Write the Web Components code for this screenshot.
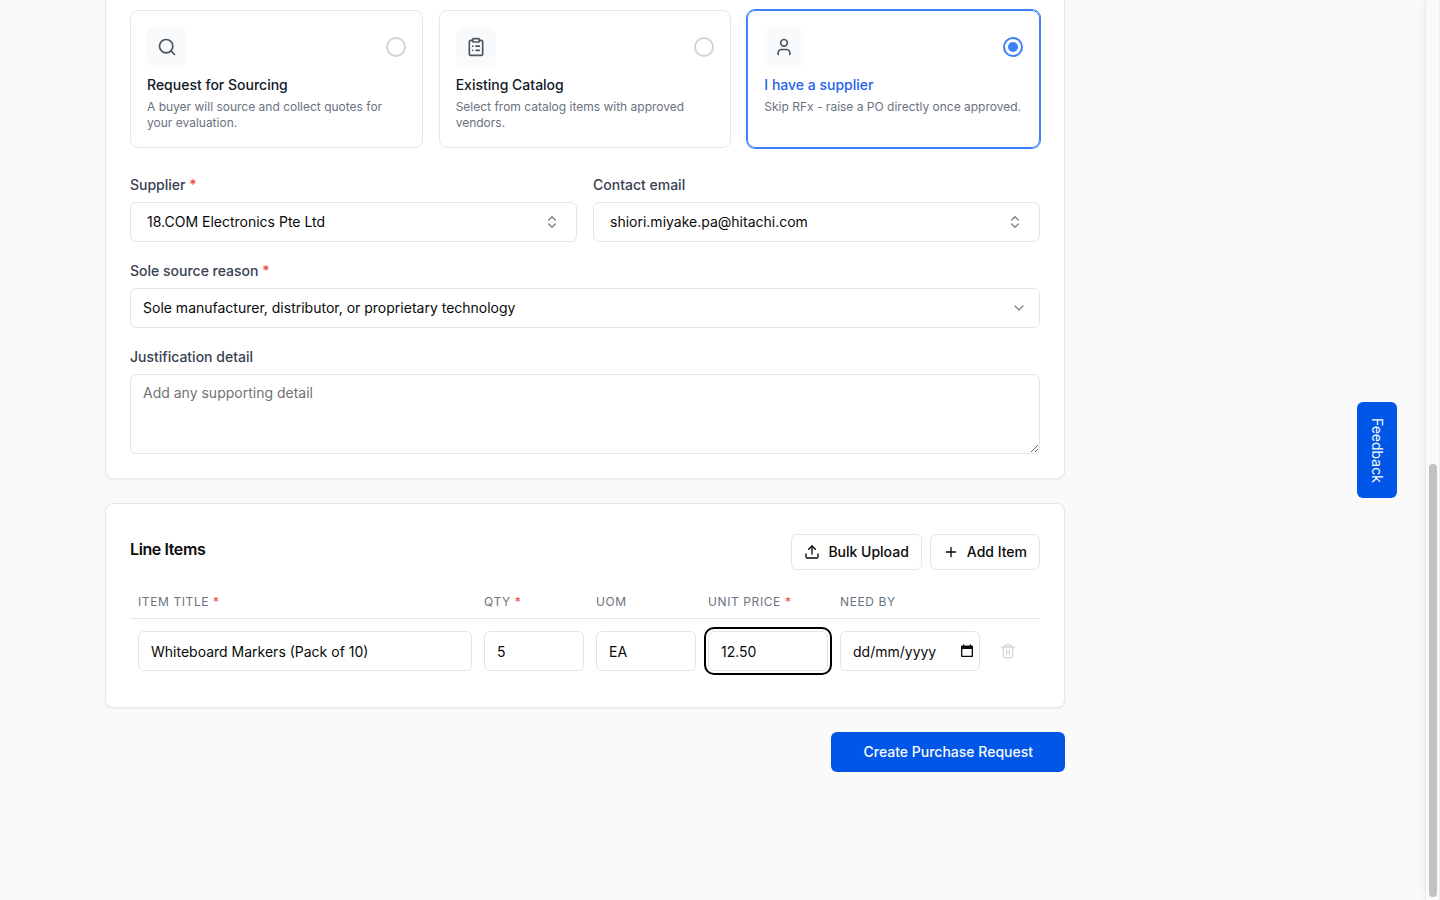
<!DOCTYPE html>
<html lang="en">
<head>
<meta charset="utf-8">
<meta name="viewport" content="width=device-width, initial-scale=1">
<title>Create Purchase Request</title>
<style>
    :root {
        --blue: #3b82f6;
        --brand: #0057e7;
        --ink: #0a0a0a;
        --heading: #111827;
        --label: #374151;
        --muted: #6b7280;
        --line: #e5e5e5;
        --required: #ef4444;
    }
    body {
        margin: 0;
        background: #fafafa;
        color: var(--ink);
        font: 14px/20px Inter, "Liberation Sans", sans-serif;
    }
</style>
</head>
<body>
<request-page>
    <panel-card continued>
        <option-group label="Sourcing method">
            <option-card value="sourcing" icon="search" heading="Request for Sourcing">A buyer will source and collect quotes for your evaluation.</option-card>
            <option-card value="catalog" icon="clipboard" heading="Existing Catalog">Select from catalog items with approved vendors.</option-card>
            <option-card value="supplier" icon="user" heading="I have a supplier" checked>Skip RFx - raise a PO directly once approved.</option-card>
        </option-group>
        <supplier-form></supplier-form>
    </panel-card>
    <panel-card>
        <line-items></line-items>
    </panel-card>
    <submit-button>Create Purchase Request</submit-button>
</request-page>
<feedback-tab>Feedback</feedback-tab>
<scroll-rail></scroll-rail>

<script>
const ICONS = {
    search: '<circle cx="11" cy="11" r="8"/><path d="m21 21-4.3-4.3"/>',
    clipboard: '<rect x="8" y="2" width="8" height="4" rx="1"/><path d="M16 4h2a2 2 0 0 1 2 2v14a2 2 0 0 1-2 2H6a2 2 0 0 1-2-2V6a2 2 0 0 1 2-2h2"/><path d="M12 11h4M12 16h4M8 11h.01M8 16h.01"/>',
    user: '<path d="M19 21v-2a4 4 0 0 0-4-4H9a4 4 0 0 0-4 4v2"/><circle cx="12" cy="7" r="4"/>',
    upload: '<path d="M21 15v4a2 2 0 0 1-2 2H5a2 2 0 0 1-2-2v-4"/><path d="m17 8-5-5-5 5"/><path d="M12 3v12"/>',
    plus: '<path d="M5 12h14M12 5v14"/>',
    updown: '<path d="m7 15 5 5 5-5M7 9l5-5 5 5"/>',
    down: '<path d="m6 9 6 6 6-6"/>',
    trash: '<path d="M3 6h18M19 6v14a2 2 0 0 1-2 2H7a2 2 0 0 1-2-2V6M8 6V4a2 2 0 0 1 2-2h4a2 2 0 0 1 2 2v2M10 11v6M14 11v6"/>',
    calendar: '<path d="M4 5h16v15H4z"/><path d="M4 5h16v3H4z" fill="currentColor"/><path d="M7 3v2M17 3v2"/>'
};

class UiIcon extends HTMLElement {
    connectedCallback() {
        const size = this.getAttribute('size') || 16;
        this.attachShadow({ mode: 'open' }).innerHTML = `
            <style>
                :host { display: block; width: ${size}px; height: ${size}px; flex: none; }
                svg { display: block; width: 100%; height: 100%; }
            </style>
            <svg viewBox="0 0 24 24" fill="none" stroke="currentColor" stroke-width="2"
                 stroke-linecap="round" stroke-linejoin="round" aria-hidden="true">${ICONS[this.getAttribute('name')]}</svg>
        `;
    }
}

class RequestPage extends HTMLElement {
    connectedCallback() {
        this.attachShadow({ mode: 'open' }).innerHTML = `
            <style>
                :host { display: block; padding: 0 120px 24px 105px; }
                main { display: flex; flex-direction: column; gap: 24px; max-width: 960px; }
            </style>
            <main><slot></slot></main>
        `;
    }
}

class PanelCard extends HTMLElement {
    connectedCallback() {
        this.attachShadow({ mode: 'open' }).innerHTML = `
            <style>
                :host {
                    display: block;
                    padding: 24px;
                    border: 1px solid #e2e8f0;
                    border-radius: 8px;
                    background: #fff;
                    box-shadow: 0 1px 2px rgb(0 0 0 / 5%);
                }
                /* runs on from above the top edge of the window */
                :host([continued]) {
                    padding-top: 10px;
                    border-top: 0;
                    border-top-left-radius: 0;
                    border-top-right-radius: 0;
                }
            </style>
            <slot></slot>
        `;
    }
}

class OptionGroup extends HTMLElement {
    connectedCallback() {
        this.attachShadow({ mode: 'open' }).innerHTML = `
            <style>
                :host { display: block; }
                div { display: grid; grid-template-columns: repeat(3, 1fr); gap: 16px; }
            </style>
            <div role="radiogroup" aria-label="${this.getAttribute('label')}"><slot></slot></div>
        `;
        this.addEventListener('option-picked', (event) => {
            for (const card of this.children) {
                card.toggleAttribute('checked', card === event.target);
            }
        });
    }
}

class OptionCard extends HTMLElement {
    static observedAttributes = ['checked'];

    connectedCallback() {
        this.attachShadow({ mode: 'open' }).innerHTML = `
            <style>
                :host { display: grid; }
                label {
                    display: block;
                    padding: 16px;
                    border: 1px solid #e5e7eb;
                    border-radius: 8px;
                    cursor: pointer;
                }
                .top { display: flex; align-items: center; justify-content: space-between; }
                .tile {
                    display: grid;
                    place-items: center;
                    width: 40px;
                    height: 40px;
                    border-radius: 8px;
                    background: #f9fafb;
                    color: #4b5563;
                }
                input {
                    appearance: none;
                    display: grid;
                    place-items: center;
                    width: 20px;
                    height: 20px;
                    margin: 0;
                    border: 2px solid #d1d5db;
                    border-radius: 50%;
                }
                input:checked { border-color: var(--blue); }
                input:checked::before {
                    content: "";
                    width: 10px;
                    height: 10px;
                    border-radius: 50%;
                    background: var(--blue);
                }
                .title { display: block; margin-top: 8px; font-weight: 500; color: var(--heading); }
                .text { display: block; margin-top: 4px; font-size: 12px; line-height: 16px; color: var(--muted); }
                :host([checked]) label { border-color: var(--blue); box-shadow: 0 0 0 1px var(--blue); }
                :host([checked]) .title { color: #2563eb; }
            </style>
            <label>
                <span class="top">
                    <span class="tile"><ui-icon name="${this.getAttribute('icon')}" size="20"></ui-icon></span>
                    <input type="radio" name="method" value="${this.getAttribute('value')}">
                </span>
                <span class="title">${this.getAttribute('heading')}</span>
                <span class="text"><slot></slot></span>
            </label>
        `;
        this.input = this.shadowRoot.querySelector('input');
        this.input.checked = this.hasAttribute('checked');
        this.input.addEventListener('change', () => {
            this.dispatchEvent(new CustomEvent('option-picked', { bubbles: true }));
        });
    }

    attributeChangedCallback() {
        if (this.input) this.input.checked = this.hasAttribute('checked');
    }
}

class SelectField extends HTMLElement {
    connectedCallback() {
        const combo = this.hasAttribute('combo');
        this.attachShadow({ mode: 'open' }).innerHTML = `
            <style>
                :host { display: block; }
                label { display: block; margin-bottom: 7px; font-weight: 500; color: var(--label); }
                label span { color: var(--required); }
                .box { display: grid; align-items: center; }
                select, ui-icon { grid-area: 1 / 1; }
                select {
                    appearance: none;
                    width: 100%;
                    height: 40px;
                    padding: 0 ${combo ? 16 : 12}px;
                    border: 1px solid var(--line);
                    border-radius: 6px;
                    background: #fff;
                    color: inherit;
                    font: inherit;
                }
                ui-icon {
                    justify-self: end;
                    margin-right: ${combo ? 17 : 13}px;
                    opacity: .5;
                    pointer-events: none;
                }
            </style>
            <label for="field">${this.getAttribute('label')}${this.hasAttribute('required') ? ' <span>*</span>' : ''}</label>
            <div class="box">
                <select id="field"><option>${this.getAttribute('value')}</option></select>
                <ui-icon name="${combo ? 'updown' : 'down'}"></ui-icon>
            </div>
        `;
    }
}

class SupplierForm extends HTMLElement {
    connectedCallback() {
        this.attachShadow({ mode: 'open' }).innerHTML = `
            <style>
                :host { display: flex; flex-direction: column; gap: 19px; margin-top: 27px; }
                .pair { display: grid; grid-template-columns: 1fr 1fr; gap: 16px; }
                label { display: block; margin-bottom: 7px; font-weight: 500; color: var(--label); }
                textarea {
                    display: block;
                    box-sizing: border-box;
                    width: 100%;
                    height: 80px;
                    padding: 8px 12px;
                    border: 1px solid var(--line);
                    border-radius: 6px;
                    background: #fff;
                    color: inherit;
                    font: inherit;
                    resize: vertical;
                }
                textarea::placeholder { color: #737373; }
            </style>
            <div class="pair">
                <select-field combo required label="Supplier" value="18.COM Electronics Pte Ltd"></select-field>
                <select-field combo label="Contact email" value="shiori.miyake.pa@hitachi.com"></select-field>
            </div>
            <select-field required label="Sole source reason" value="Sole manufacturer, distributor, or proprietary technology"></select-field>
            <div>
                <label for="detail">Justification detail</label>
                <textarea id="detail" placeholder="Add any supporting detail"></textarea>
            </div>
        `;
    }
}

class LineItems extends HTMLElement {
    connectedCallback() {
        this.attachShadow({ mode: 'open' }).innerHTML = `
            <style>
                :host { display: block; }
                header {
                    display: flex;
                    align-items: flex-start;
                    justify-content: space-between;
                    padding: 6px 0 16px;
                }
                h2 { margin: 0; font-size: 16px; line-height: 30px; font-weight: 600; letter-spacing: -0.025em; }
                .actions { display: flex; gap: 8px; }
                button { border: 0; background: none; color: inherit; font: inherit; cursor: pointer; }
                .actions button {
                    display: flex;
                    align-items: center;
                    gap: 8px;
                    height: 36px;
                    padding: 0 12px;
                    border: 1px solid var(--line);
                    border-radius: 6px;
                    background: #fff;
                    font-weight: 500;
                }
                table { width: 100%; border-collapse: collapse; table-layout: fixed; }
                th {
                    box-sizing: border-box;
                    padding: 8px 4px 8px 8px;
                    border-bottom: 1px solid #e5e7eb;
                    color: var(--muted);
                    font-size: 12px;
                    line-height: 16px;
                    font-weight: 400;
                    letter-spacing: 0.05em;
                    text-align: left;
                    text-transform: uppercase;
                }
                th span { color: var(--required); }
                td { padding: 12px 4px 12px 8px; }
                .small { width: 112px; }
                .price { width: 132px; }
                .date { width: 152px; }
                .tools { width: 56px; }
                input {
                    display: block;
                    box-sizing: border-box;
                    width: 100%;
                    height: 40px;
                    padding: 0 12px;
                    border: 1px solid var(--line);
                    border-radius: 6px;
                    background: #fff;
                    color: inherit;
                    font: inherit;
                }
                input:focus { outline: 2px solid #000; outline-offset: 2px; }
                .day { display: grid; align-items: center; }
                .day input, .day button { grid-area: 1 / 1; }
                .day input { padding-right: 36px; }
                .day input::placeholder { color: var(--ink); }
                .day button { justify-self: end; margin-right: 5px; padding: 0; }
                .remove { display: grid; place-items: center; width: 32px; height: 32px; padding: 0; color: #d1d5db; }
            </style>
            <header>
                <h2>Line Items</h2>
                <div class="actions">
                    <button type="button"><ui-icon name="upload"></ui-icon>Bulk Upload</button>
                    <button type="button"><ui-icon name="plus"></ui-icon>Add Item</button>
                </div>
            </header>
            <table>
                <thead>
                    <tr>
                        <th id="title">Item Title <span>*</span></th>
                        <th id="qty" class="small">Qty <span>*</span></th>
                        <th id="uom" class="small">UOM</th>
                        <th id="price" class="price">Unit Price <span>*</span></th>
                        <th id="date" class="date">Need By</th>
                        <th class="tools"></th>
                    </tr>
                </thead>
                <tbody>
                    <tr>
                        <td><input aria-labelledby="title" value="Whiteboard Markers (Pack of 10)"></td>
                        <td><input aria-labelledby="qty" inputmode="numeric" value="5"></td>
                        <td><input aria-labelledby="uom" value="EA"></td>
                        <td><input aria-labelledby="price" inputmode="decimal" value="12.50" class="unit-price"></td>
                        <td>
                            <div class="day">
                                <input aria-labelledby="date" placeholder="dd/mm/yyyy">
                                <button type="button" aria-label="Pick a date"><ui-icon name="calendar"></ui-icon></button>
                            </div>
                        </td>
                        <td><button type="button" class="remove" aria-label="Remove item"><ui-icon name="trash"></ui-icon></button></td>
                    </tr>
                </tbody>
            </table>
        `;
        this.shadowRoot.querySelector('.unit-price').focus();
    }
}

class SubmitButton extends HTMLElement {
    connectedCallback() {
        this.attachShadow({ mode: 'open' }).innerHTML = `
            <style>
                :host { display: block; align-self: flex-end; }
                button {
                    height: 40px;
                    padding: 0 32px;
                    border: 0;
                    border-radius: 6px;
                    background: var(--brand);
                    color: #fafafa;
                    font: inherit;
                    font-weight: 500;
                    cursor: pointer;
                }
            </style>
            <button type="submit"><slot></slot></button>
        `;
    }
}

class FeedbackTab extends HTMLElement {
    connectedCallback() {
        this.attachShadow({ mode: 'open' }).innerHTML = `
            <style>
                :host {
                    position: fixed;
                    top: 0;
                    bottom: 0;
                    right: 43px;
                    display: flex;
                    align-items: center;
                    pointer-events: none;
                }
                button {
                    width: 40px;
                    padding: 16px 0;
                    border: 0;
                    border-radius: 6px;
                    background: var(--brand);
                    color: #fafafa;
                    font: inherit;
                    writing-mode: vertical-rl;
                    cursor: pointer;
                    pointer-events: auto;
                }
            </style>
            <button type="button"><slot></slot></button>
        `;
    }
}

class ScrollRail extends HTMLElement {
    connectedCallback() {
        this.attachShadow({ mode: 'open' }).innerHTML = `
            <style>
                :host {
                    position: fixed;
                    top: 0;
                    bottom: 0;
                    right: 0;
                    display: flex;
                    flex-direction: column;
                    justify-content: flex-end;
                    box-sizing: border-box;
                    width: 15px;
                    padding: 3px 2px 3px 3px;
                    border-left: 1px solid #e8e8e8;
                    border-right: 1px solid #ededed;
                    background: #fafafa;
                    box-shadow: 0 0 12px rgb(0 0 0 / 6%);
                }
                div { height: 48.4%; border-radius: 4px; background: #c1c1c1; }
            </style>
            <div></div>
        `;
    }
}

customElements.define('ui-icon', UiIcon);
customElements.define('request-page', RequestPage);
customElements.define('panel-card', PanelCard);
customElements.define('option-group', OptionGroup);
customElements.define('option-card', OptionCard);
customElements.define('select-field', SelectField);
customElements.define('supplier-form', SupplierForm);
customElements.define('line-items', LineItems);
customElements.define('submit-button', SubmitButton);
customElements.define('feedback-tab', FeedbackTab);
customElements.define('scroll-rail', ScrollRail);
</script>
</body>
</html>
